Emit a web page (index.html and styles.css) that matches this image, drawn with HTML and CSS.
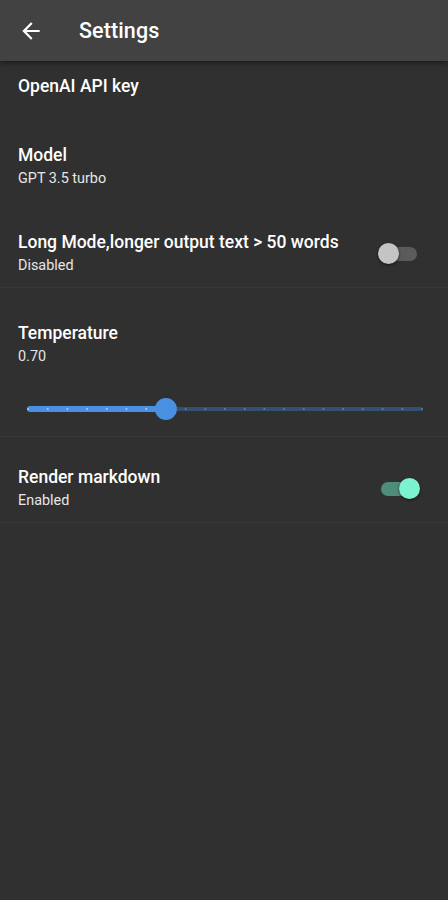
FILE: index.html
```html
<!DOCTYPE html>
<html lang="en">
<head>
    <meta charset="UTF-8">
    <meta name="viewport" content="width=device-width, initial-scale=1.0">
    <title>Settings</title>
    <link rel="stylesheet" href="styles.css">
</head>
<body>
    <header class="app-bar">
        <button class="back-btn" aria-label="Back">
            <svg viewBox="0 0 24 24" width="26" height="26">
                <path fill="#ffffff" d="M20 11H7.83l5.59-5.59L12 4l-8 8 8 8 1.41-1.41L7.83 13H20v-2z"/>
            </svg>
        </button>
        <h1 class="app-title">Settings</h1>
    </header>

    <main class="settings">
        <div class="tile tile-key">
            <div class="tile-text">
                <div class="tile-title">OpenAI API key</div>
            </div>
        </div>

        <div class="tile tile-model">
            <div class="tile-text">
                <div class="tile-title">Model</div>
                <div class="tile-sub">GPT 3.5 turbo</div>
            </div>
        </div>

        <div class="tile tile-long divided">
            <div class="tile-text">
                <div class="tile-title">Long Mode,longer output text &gt; 50 words</div>
                <div class="tile-sub">Disabled</div>
            </div>
            <div class="switch">
                <span class="track"></span>
                <span class="thumb"></span>
            </div>
        </div>

        <div class="tile tile-temp divided">
            <div class="tile-text">
                <div class="tile-title">Temperature</div>
                <div class="tile-sub">0.70</div>
                <svg class="slider" id="slider" viewBox="0 0 412 30" width="412" height="30"></svg>
            </div>
        </div>

        <div class="tile tile-md divided">
            <div class="tile-text">
                <div class="tile-title">Render markdown</div>
                <div class="tile-sub">Enabled</div>
            </div>
            <div class="switch on">
                <span class="track"></span>
                <span class="thumb"></span>
            </div>
        </div>
    </main>

    <script>
        // temperature slider: 0..2, step 0.1
        const svg = document.getElementById("slider");
        const x0 = 10, x1 = 404, cy = 15;
        const value = 0.7, max = 2, divisions = 20;
        const tx = x0 + (x1 - x0) * value / max;
        const ns = "http://www.w3.org/2000/svg";

        function el(name, attrs) {
            const e = document.createElementNS(ns, name);
            for (const k in attrs) e.setAttribute(k, attrs[k]);
            svg.appendChild(e);
            return e;
        }

        el("rect", { x: tx, y: cy - 2, width: x1 - tx + 1, height: 4, rx: 2, fill: "#34506f" });
        el("rect", { x: x0 - 1, y: cy - 3, width: tx - x0 + 1, height: 6, rx: 3, fill: "#4a90e2" });

        for (let i = 0; i <= divisions; i++) {
            const x = x0 + (x1 - x0) * i / divisions;
            el("circle", { cx: x, cy: cy, r: 1, fill: x < tx ? "#a9cbf2" : "#5580b0" });
        }

        el("circle", { cx: tx, cy: cy, r: 11, fill: "#4a90e2" });
    </script>
</body>
</html>
```

FILE: styles.css
```css
body {
    margin: 0;
    padding: 0;
    background-color: #303030;
    color: #fff;
    font-family: Roboto, "Noto Sans", Arial, sans-serif;
    min-height: 900px;
}

.app-bar {
    height: 61px;
    display: flex;
    align-items: center;
    background: #424242;
    box-shadow: 0 2px 5px rgba(0, 0, 0, 0.45);
    position: relative;
    z-index: 1;
}

.back-btn {
    width: 26px;
    height: 26px;
    margin-left: 18px;
    padding: 0;
    border: none;
    background: none;
    display: flex;
}

.app-title {
    margin: 0 0 0 35px;
    font-size: 21.5px;
    font-weight: 500;
    letter-spacing: 0.1px;
}

.tile {
    display: flex;
    align-items: center;
    padding: 0 18px;
}

.tile-text {
    flex: 1;
}

.tile-title {
    font-size: 17.5px;
    font-weight: 500;
    line-height: 22px;
}

.tile-sub {
    margin-top: 3px;
    font-size: 14.4px;
    line-height: 20px;
    color: #e6e6e6;
}

.divided {
    border-bottom: 1px solid #383838;
}

.tile-key {
    padding-top: 14px;
    padding-bottom: 23px;
}

.tile-model {
    padding-top: 24px;
    padding-bottom: 21px;
}

.tile-long {
    padding-top: 21px;
    padding-bottom: 11px;
}

.tile-temp {
    padding-top: 34px;
    padding-bottom: 12px;
}

.tile-md {
    padding-top: 29px;
    padding-bottom: 11px;
}

.slider {
    display: block;
    margin-top: 27px;
}

.switch {
    position: relative;
    width: 42px;
    height: 21px;
    margin-right: 10px;
}

.switch .track {
    position: absolute;
    left: 3px;
    right: 3px;
    top: 3.5px;
    height: 14px;
    border-radius: 7px;
    background: #5b5b5b;
}

.switch .thumb {
    position: absolute;
    left: 0;
    top: 0;
    width: 21px;
    height: 21px;
    border-radius: 50%;
    background: #c4c4c4;
    box-shadow: 0 1px 3px rgba(0, 0, 0, 0.6);
}

.switch.on .track {
    background: #4f8c7b;
}

.switch.on .thumb {
    left: auto;
    right: 0;
    background: #7df2cf;
}
```
